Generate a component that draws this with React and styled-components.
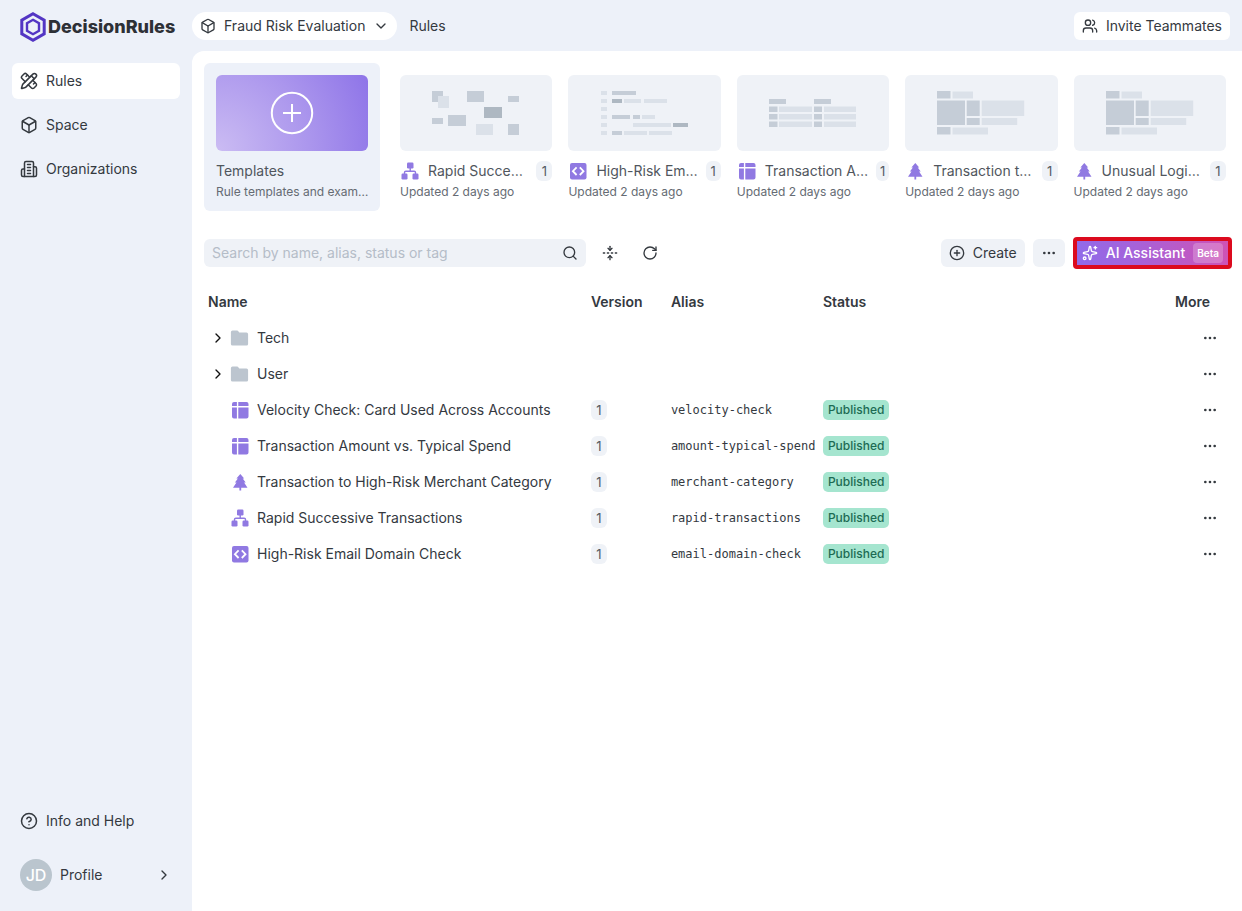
import React from 'react';
import styled, { createGlobalStyle } from 'styled-components';
import {
  Box,
  ChevronDown,
  ChevronRight,
  CircleHelp,
  CirclePlus,
  Ellipsis,
  FoldVertical,
  PencilRuler,
  RotateCw,
  Search,
  Sparkles,
  Users,
} from 'lucide-react';

const colors = {
  page: '#edf1f9',
  panel: '#eff2f7',
  text: '#34393f',
  muted: '#656b73',
  purple: '#9079e2',
  light: '#dbe1e9',
  mid: '#c5cdd7',
  dark: '#aeb8c2',
};

const GlobalStyle = createGlobalStyle`
  *, *::before, *::after {
    box-sizing: border-box;
  }
  body {
    margin: 0;
    background: ${colors.page};
    color: ${colors.text};
    font: 14px/20px Inter, sans-serif;
  }
  button, input {
    font: inherit;
    color: inherit;
  }
  button {
    padding: 0;
    border: none;
    background: none;
    cursor: pointer;
  }
  a {
    color: inherit;
    text-decoration: none;
  }
  svg {
    display: block;
    flex: none;
  }
`;

const Layout = styled.div`
  display: grid;
  grid-template-columns: 192px minmax(0, 1fr);
  grid-template-rows: auto 1fr;
  min-height: 100vh;
`;

const Logo = styled.a`
  display: flex;
  align-items: center;
  gap: 2px;
  padding: 2px 0 0 20px;
  color: #2d3036;
  font-size: 18px;
  font-weight: 800;
`;

const Header = styled.header`
  display: flex;
  align-items: center;
  justify-content: space-between;
  padding: 12px 12px 11px 0;
`;

const Crumbs = styled.nav`
  display: flex;
  align-items: center;
  gap: 12px;
`;

const ProjectButton = styled.button`
  display: flex;
  align-items: center;
  gap: 8px;
  height: 28px;
  padding: 0 8px;
  border-radius: 14px;
  background: #fff;
`;

const InviteButton = styled(ProjectButton)`
  border-radius: 6px;
`;

const Sidebar = styled.aside`
  display: flex;
  flex-direction: column;
  justify-content: space-between;
  padding: 12px 12px 18px;
`;

const NavList = styled.nav`
  display: flex;
  flex-direction: column;
  gap: 8px;
`;

const NavItem = styled.a`
  display: flex;
  align-items: center;
  gap: 8px;
  height: 36px;
  padding: 0 8px;
  border-radius: 6px;
  background: ${(p) => (p.$active ? '#fff' : 'transparent')};
`;

const ProfileButton = styled.button`
  display: flex;
  align-items: center;
  gap: 8px;
  height: 36px;
  margin-top: 10px;
  padding: 0 8px;
  text-align: left;
`;

const Avatar = styled.span`
  width: 32px;
  height: 32px;
  border-radius: 50%;
  background: #bac5ce;
  color: #fff;
  font-size: 16px;
  font-weight: 500;
  line-height: 32px;
  text-align: center;
`;

const Grow = styled.span`
  flex: 1;
`;

const Main = styled.main`
  padding: 12px 8px 12px 12px;
  border-top-left-radius: 12px;
  background: #fff;
`;

const CardStrip = styled.section`
  display: grid;
  grid-template-columns: 176px minmax(0, 1fr);
  gap: 12px;
`;

const CardGrid = styled.div`
  display: grid;
  grid-template-columns: repeat(5, minmax(0, 1fr));
`;

const Card = styled.a`
  display: block;
  height: 148px;
  padding: ${(p) => (p.$filled ? '12px' : '12px 8px')};
  border-radius: 6px;
  background: ${(p) => (p.$filled ? colors.page : 'transparent')};
`;

const Thumb = styled.div`
  display: flex;
  align-items: center;
  justify-content: center;
  height: 76px;
  margin-bottom: 10px;
  border-radius: 6px;
  background: ${colors.panel};
`;

const TemplateThumb = styled(Thumb)`
  background: radial-gradient(circle at 0% 100%, #cbbcf3 0%, #ab96ed 55%, #8e74e8 100%);
`;

const CardTitle = styled.div`
  display: flex;
  align-items: center;
  gap: 8px;
  color: #50565d;
  white-space: nowrap;
`;

const CardNote = styled.div`
  color: ${colors.muted};
  font-size: 12px;
  line-height: 22px;
  white-space: nowrap;
`;

const Version = styled.span`
  display: block;
  width: 16px;
  height: 20px;
  border-radius: 6px;
  background: ${colors.panel};
  color: #555b63;
  font-size: 13px;
  text-align: center;
`;

const CardVersion = styled(Version)`
  margin-left: auto;
`;

const Toolbar = styled.div`
  display: flex;
  align-items: center;
  gap: 8px;
  height: 32px;
  margin: 26px 2px 15px 0;
`;

const SearchBox = styled.label`
  display: flex;
  flex: 0 1 382px;
  align-items: center;
  height: 28px;
  padding: 0 8px;
  border-radius: 6px;
  background: ${colors.panel};
`;

const SearchInput = styled.input`
  flex: 1;
  min-width: 0;
  padding: 0;
  border: none;
  outline: none;
  background: none;
  &::placeholder {
    color: #b5bdc8;
    opacity: 1;
  }
`;

const IconButton = styled.button`
  display: flex;
  align-items: center;
  justify-content: center;
  width: 32px;
  height: 28px;
  border-radius: 6px;
  background: ${(p) => (p.$filled ? colors.panel : 'transparent')};
`;

const CreateButton = styled.button`
  display: flex;
  align-items: center;
  gap: 8px;
  height: 28px;
  padding: 0 8px;
  border-radius: 6px;
  background: ${colors.panel};
`;

const AssistantButton = styled.button`
  display: flex;
  align-items: center;
  gap: 8px;
  height: 32px;
  padding: 0 5px;
  border: 4px solid #dc0a1e;
  border-radius: 4px;
  background: linear-gradient(75deg, #8f6bea, #a662d9 40%, #d052b4) padding-box;
  color: #fff;
  font-weight: 500;
`;

const Beta = styled.span`
  height: 20px;
  padding: 0 4px;
  border-radius: 4px;
  background: rgba(255, 255, 255, 0.22);
  font-size: 10px;
  font-weight: 600;
`;

const Table = styled.table`
  width: calc(100% - 6px);
  border-spacing: 0;
  table-layout: fixed;
`;

const Th = styled.th`
  width: ${(p) => p.$width || 'auto'};
  height: 36px;
  padding: ${(p) => (p.$first ? '0 4px' : '0 8px')};
  font-weight: 600;
  text-align: left;
`;

const ThMore = styled(Th)`
  padding-right: 18px;
  text-align: right;
`;

const Td = styled.td`
  height: 36px;
  padding: 0 8px;
  white-space: nowrap;
`;

const NameTd = styled(Td)`
  padding: 0 2px;
`;

const MoreTd = styled(Td)`
  padding: 0 2px;
`;

const MoreButton = styled(IconButton)`
  margin-left: auto;
`;

const NameCell = styled.div`
  display: flex;
  align-items: center;
`;

const Toggle = styled.button`
  display: flex;
  align-items: center;
  justify-content: center;
  width: 24px;
  height: 24px;
  color: #111;
`;

const ToggleSpace = styled.span`
  width: 24px;
`;

const NameText = styled.span`
  margin-left: 7px;
`;

const Alias = styled.span`
  display: block;
  font-family: 'DejaVu Sans Mono', monospace;
  font-size: 12px;
`;

const Status = styled.span`
  display: block;
  width: fit-content;
  height: 20px;
  padding: 0 5px;
  border-radius: 5px;
  background: #a5e5cf;
  color: #1d6b53;
  font-size: 12px;
  font-weight: 500;
`;

const LogoMark = () => (
  <svg width="26" height="30" viewBox="0 0 26 30" fill="none">
    <path d="M13 1.8 24.2 8.2v13.6L13 28.2 1.8 21.8V8.2z" stroke="#5335c4" strokeWidth="3" />
    <path d="M13 7.8 19 11.3v7.4l-6 3.5-6-3.5v-7.4z" stroke="#5335c4" strokeWidth="2.4" />
  </svg>
);

const BuildingIcon = () => (
  <svg
    width="18"
    height="18"
    viewBox="0 0 24 24"
    fill="none"
    stroke="currentColor"
    strokeWidth="2"
    strokeLinecap="round"
    strokeLinejoin="round"
  >
    <path d="M6 22V4a2 2 0 0 1 2-2h8a2 2 0 0 1 2 2v18Z" />
    <path d="M6 12H4a2 2 0 0 0-2 2v6a2 2 0 0 0 2 2h2" />
    <path d="M18 9h2a2 2 0 0 1 2 2v9a2 2 0 0 1-2 2h-2" />
    <path d="M10 6h4M10 10h4M10 14h4M10 18h4" />
  </svg>
);

const PlusCircle = () => (
  <svg width="44" height="44" viewBox="0 0 44 44" fill="none" stroke="#fff" strokeWidth="2">
    <circle cx="22" cy="22" r="20.2" />
    <path d="M22 13v18M13 22h18" />
  </svg>
);

const typePaths = {
  flow: (
    <>
      <rect x="7" y="1.5" width="6.5" height="6" rx="1.2" />
      <rect x="1.5" y="12.5" width="6" height="6" rx="1.2" />
      <rect x="12.5" y="12.5" width="6" height="6" rx="1.2" />
      <path
        d="M10.2 7v3.2M4.5 13v-1.4q0-1.3 1.3-1.3h8.4q1.3 0 1.3 1.3V13"
        fill="none"
        stroke={colors.purple}
        strokeWidth="1.4"
      />
    </>
  ),
  script: (
    <>
      <rect x="2" y="2" width="16.5" height="16.5" rx="2" />
      <path
        d="M8.6 6.4 4.9 10.2l3.7 3.8M11.8 6.4l3.7 3.8-3.7 3.8"
        fill="none"
        stroke="#fff"
        strokeWidth="1.8"
      />
    </>
  ),
  table: (
    <>
      <path d="M4 2h2.9v4H2V4a2 2 0 0 1 2-2zM8.3 2h8.2a2 2 0 0 1 2 2v2H8.3z" />
      <path d="M2 7.4h4.9v11.1H4a2 2 0 0 1-2-2zM8.3 7.4h10.2v9.1a2 2 0 0 1-2 2H8.3z" />
    </>
  ),
  tree: (
    <path d="M10.3 2 14.2 6.6h-1.5l3 4h-1.6l3.4 5.2h-6.3V18.6H9.4v-2.8H3l3.5-5.2H4.9l3-4H6.4z" />
  ),
  folder: (
    <path
      fill="#bcc5cf"
      d="M2.5 2.5h4.6q.8 0 1.2.7l1 1.4h7.2q1.6 0 1.6 1.6v9.8q0 1.6-1.6 1.6h-14Q.9 17.600.9 16V4.100Q.9 2.500 2.500 2.500z"
    />
  ),
};

const TypeIcon = ({ type }) => (
  <svg width="20" height="20" viewBox="0 0 20 20" fill={colors.purple}>
    {typePaths[type]}
  </svg>
);

// x, y, width, height, shade
const previews = {
  flow: [
    [0, 0, 11, 11, 'mid'],
    [6, 5, 11, 12, 'light'],
    [35, 0, 17, 11, 'mid'],
    [76, 5, 11, 6, 'mid'],
    [52, 16, 18, 11, 'dark'],
    [0, 27, 11, 6, 'mid'],
    [16, 24, 18, 11, 'mid'],
    [44, 33, 17, 11, 'light'],
    [76, 33, 11, 11, 'mid'],
  ],
  script: [
    ...[0, 8, 16, 24, 32, 40].map((y) => [0, y, 6, 4, 'light']),
    [11, 0, 24, 4, 'mid'],
    [11, 8, 10, 4, 'dark'],
    [23, 8, 17, 4, 'light'],
    [43, 8, 23, 4, 'light'],
    [11, 24, 18, 4, 'mid'],
    [32, 24, 7, 4, 'mid'],
    [41, 24, 13, 4, 'light'],
    [32, 32, 38, 4, 'light'],
    [72, 32, 15, 4, 'dark'],
    [11, 40, 10, 4, 'mid'],
    [23, 40, 23, 4, 'light'],
    [48, 40, 23, 4, 'light'],
  ],
  table: [
    [0, 8, 17, 5, 'mid'],
    [45, 8, 17, 5, 'mid'],
    ...[15.5, 23, 30.5].flatMap((y) => [
      [0, y, 8.5, 5.5, 'mid'],
      [10, y, 33, 5.5, 'light'],
      [45, y, 8, 5.5, 'mid'],
      [55, y, 32, 5.5, 'light'],
    ]),
  ],
  tree: [
    [0, 0, 13.5, 7.5, 'mid'],
    [15.5, 0.5, 20.5, 7, 'light'],
    [0, 9.5, 28, 24.5, 'mid'],
    [29.7, 9.5, 13, 15.5, 'mid'],
    [44.7, 9.5, 42.5, 15.5, 'light'],
    [29.7, 27, 13, 7, 'mid'],
    [44.7, 27, 35.5, 7, 'light'],
    [0, 36, 13.5, 7.5, 'mid'],
    [15.5, 36.5, 35.5, 7, 'light'],
  ],
};

const Preview = ({ type }) => (
  <svg width="88" height="44" viewBox="0 0 88 44">
    {previews[type].map(([x, y, w, h, shade]) => (
      <rect key={`${x}-${y}`} x={x} y={y} width={w} height={h} fill={colors[shade]} />
    ))}
  </svg>
);

const recent = [
  { type: 'flow', title: 'Rapid Succe…' },
  { type: 'script', title: 'High-Risk Em…' },
  { type: 'table', title: 'Transaction A…' },
  { type: 'tree', title: 'Transaction t…' },
  { type: 'tree', title: 'Unusual Logi…' },
];

const folders = ['Tech', 'User'];

const rules = [
  { type: 'table', name: 'Velocity Check: Card Used Across Accounts', alias: 'velocity-check' },
  { type: 'table', name: 'Transaction Amount vs. Typical Spend', alias: 'amount-typical-spend' },
  { type: 'tree', name: 'Transaction to High-Risk Merchant Category', alias: 'merchant-category' },
  { type: 'flow', name: 'Rapid Successive Transactions', alias: 'rapid-transactions' },
  { type: 'script', name: 'High-Risk Email Domain Check', alias: 'email-domain-check' },
];

const RowMenu = () => (
  <MoreTd>
    <MoreButton aria-label="More">
      <Ellipsis size={16} />
    </MoreButton>
  </MoreTd>
);

export default function App() {
  return (
    <Layout>
      <GlobalStyle />
      <Logo href="#">
        <LogoMark />
        DecisionRules
      </Logo>
      <Header>
        <Crumbs>
          <ProjectButton>
            <Box size={16} />
            Fraud Risk Evaluation
            <ChevronDown size={16} />
          </ProjectButton>
          <a href="#rules">Rules</a>
        </Crumbs>
        <InviteButton>
          <Users size={16} />
          Invite Teammates
        </InviteButton>
      </Header>

      <Sidebar>
        <NavList>
          <NavItem href="#rules" $active>
            <PencilRuler size={18} />
            Rules
          </NavItem>
          <NavItem href="#space">
            <Box size={18} />
            Space
          </NavItem>
          <NavItem href="#organizations">
            <BuildingIcon />
            Organizations
          </NavItem>
        </NavList>
        <NavList>
          <NavItem href="#help">
            <CircleHelp size={18} />
            Info and Help
          </NavItem>
          <ProfileButton>
            <Avatar>JD</Avatar>
            <Grow>Profile</Grow>
            <ChevronRight size={16} />
          </ProfileButton>
        </NavList>
      </Sidebar>

      <Main>
        <CardStrip>
          <Card href="#templates" $filled>
            <TemplateThumb>
              <PlusCircle />
            </TemplateThumb>
            <CardTitle>Templates</CardTitle>
            <CardNote>Rule templates and exam…</CardNote>
          </Card>
          <CardGrid>
            {recent.map(({ type, title }) => (
              <Card key={title} href="#rule">
                <Thumb>
                  <Preview type={type} />
                </Thumb>
                <CardTitle>
                  <TypeIcon type={type} />
                  {title}
                  <CardVersion>1</CardVersion>
                </CardTitle>
                <CardNote>Updated 2 days ago</CardNote>
              </Card>
            ))}
          </CardGrid>
        </CardStrip>

        <Toolbar>
          <SearchBox>
            <SearchInput
              aria-label="Search rules"
              placeholder="Search by name, alias, status or tag"
            />
            <Search size={16} />
          </SearchBox>
          <IconButton aria-label="Collapse all">
            <FoldVertical size={16} />
          </IconButton>
          <IconButton aria-label="Refresh">
            <RotateCw size={16} />
          </IconButton>
          <Grow />
          <CreateButton>
            <CirclePlus size={16} />
            Create
          </CreateButton>
          <IconButton aria-label="More actions" $filled>
            <Ellipsis size={16} />
          </IconButton>
          <AssistantButton>
            <Sparkles size={16} />
            AI Assistant
            <Beta>Beta</Beta>
          </AssistantButton>
        </Toolbar>

        <Table>
          <thead>
            <tr>
              <Th $first $width="37%">Name</Th>
              <Th $width="80px">Version</Th>
              <Th $width="152px">Alias</Th>
              <Th>Status</Th>
              <ThMore $width="72px">More</ThMore>
            </tr>
          </thead>
          <tbody>
            {folders.map((name) => (
              <tr key={name}>
                <NameTd colSpan={4}>
                  <NameCell>
                    <Toggle aria-label={`Expand ${name}`}>
                      <ChevronRight size={16} />
                    </Toggle>
                    <TypeIcon type="folder" />
                    <NameText>{name}</NameText>
                  </NameCell>
                </NameTd>
                <RowMenu />
              </tr>
            ))}
            {rules.map(({ type, name, alias }) => (
              <tr key={alias}>
                <NameTd>
                  <NameCell>
                    <ToggleSpace />
                    <TypeIcon type={type} />
                    <NameText>{name}</NameText>
                  </NameCell>
                </NameTd>
                <Td>
                  <Version>1</Version>
                </Td>
                <Td>
                  <Alias>{alias}</Alias>
                </Td>
                <Td>
                  <Status>Published</Status>
                </Td>
                <RowMenu />
              </tr>
            ))}
          </tbody>
        </Table>
      </Main>
    </Layout>
  );
}
